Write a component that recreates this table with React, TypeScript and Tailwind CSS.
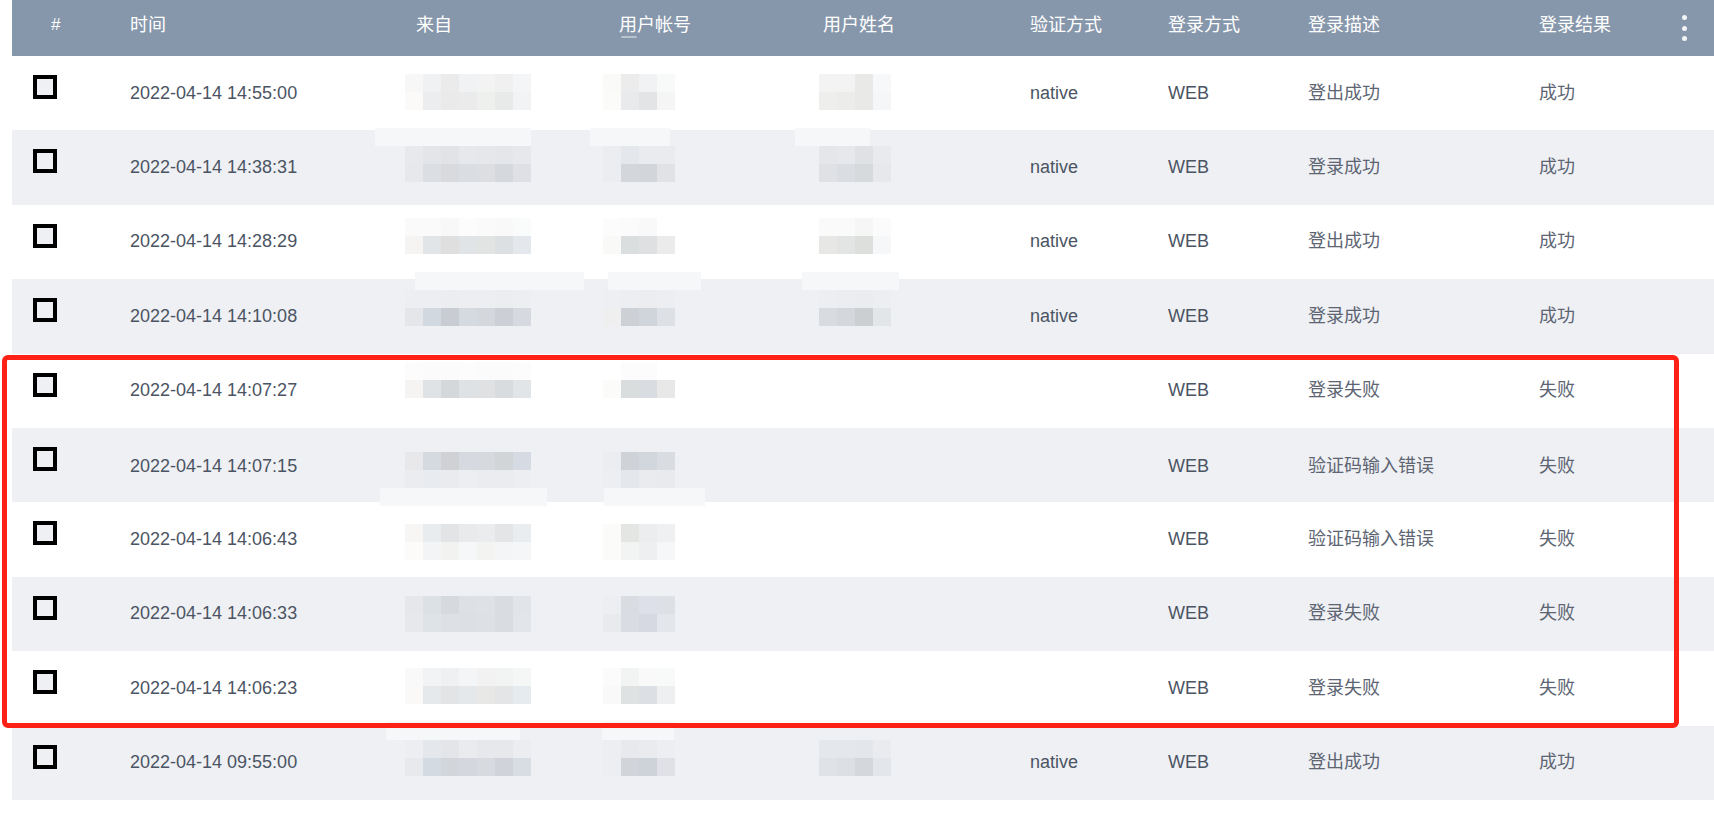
import React from "react";

type Grid = string[][];
type Smear = { ml: number; w: number };
type Cell = { blocks: Grid; smearTop?: Smear; smearBottom?: Smear };

type Row = {
  time: string;
  auth: string;
  desc: string;
  result: string;
  top: number;
  from: Cell;
  acct: Cell;
  name?: Cell;
};

const rows: Row[] = [
  {
    time: "2022-04-14 14:55:00",
    auth: "native",
    desc: "登出成功",
    result: "成功",
    top: 18,
    from: {
      blocks: [
        ["#f7f7f7", "#f0f1f2", "#ebebeb", "#f1f2f3", "#f2f3f2", "#f0f0f0", "#f4f5f6"],
        ["#fbfaf9", "#ecedef", "#eaeaea", "#ebebeb", "#eef0ee", "#e8e9e9", "#f2f3f4"],
      ],
    },
    acct: {
      blocks: [
        ["#fafaf9", "#ececed", "#f1f2f3", "#f8f9f9"],
        ["#fbfbfa", "#e9eaeb", "#e3e4e6", "#f5f5f5"],
      ],
    },
    name: {
      blocks: [
        ["#f2f3f2", "#f2f3f2", "#e9eae8", "#f7f8f9"],
        ["#eeeeec", "#ecedeb", "#e9e9e7", "#f5f6f7"],
      ],
    },
  },
  {
    time: "2022-04-14 14:38:31",
    auth: "native",
    desc: "登录成功",
    result: "成功",
    top: 15.6,
    from: {
      smearTop: { ml: -30, w: 156 },
      blocks: [
        ["#e8e9ec", "#e3e5e9", "#e2e3e7", "#e7e8ec", "#e5e7eb", "#e4e6ea", "#e6e8ec"],
        ["#e7e8ec", "#dbdfe4", "#d8dade", "#dadde1", "#dcdee2", "#d5d8dc", "#dfe0e6"],
      ],
    },
    acct: {
      smearTop: { ml: -13, w: 80 },
      blocks: [
        ["#ecedf0", "#e4e7eb", "#e9ebee", "#eaebee"],
        ["#ecedf0", "#d3d6da", "#d2d5da", "#e0e2e6"],
      ],
    },
    name: {
      smearTop: { ml: -24, w: 75 },
      blocks: [
        ["#e4e6ea", "#e6e8ec", "#dfe1e5", "#e8eaee"],
        ["#dfe1e5", "#dadde1", "#d7dadd", "#e6e8ec"],
      ],
    },
  },
  {
    time: "2022-04-14 14:28:29",
    auth: "native",
    desc: "登出成功",
    result: "成功",
    top: 13.2,
    from: {
      blocks: [
        ["#fafafa", "#f9faf9", "#f7f8f7", "#fbfcfb", "#f9faf9", "#f8f9f8", "#fafbfb"],
        ["#f5f4f3", "#e1e5e8", "#dfdfdf", "#e1e4e6", "#e2e3e3", "#dde0e3", "#e4e8ec"],
      ],
    },
    acct: {
      blocks: [
        ["#fcfcfc", "#fbfbfb", "#f9f9f9", "#ffffff"],
        ["#f9f9f7", "#dbdede", "#dee0e2", "#ebebeb"],
      ],
    },
    name: {
      blocks: [
        ["#fafafa", "#fafafa", "#f6f6f6", "#fbfbfb"],
        ["#e7e8e6", "#e3e5e5", "#dddfdd", "#f6f7f8"],
      ],
    },
  },
  {
    time: "2022-04-14 14:10:08",
    auth: "native",
    desc: "登录成功",
    result: "成功",
    top: 10.8,
    from: {
      smearTop: { ml: 10, w: 169 },
      blocks: [
        ["#eceef1", "#eceef2", "#ebedf1", "#eceef2", "#eceef1", "#ebedf1", "#eceef2"],
        ["#e4e6ea", "#d2d8df", "#c9cdd3", "#d5d9e0", "#d4d8dd", "#ccd0d6", "#d6d9e0"],
      ],
    },
    acct: {
      smearTop: { ml: 5, w: 93 },
      blocks: [
        ["#eeeff2", "#eceef1", "#ebedf0", "#eceef1"],
        ["#efefef", "#cdd1d5", "#d0d5db", "#dde0e4"],
      ],
    },
    name: {
      smearTop: { ml: -17, w: 97 },
      blocks: [
        ["#eceef1", "#ebedf0", "#eaecef", "#eceef1"],
        ["#d8dbdf", "#d4d7db", "#cbcfd2", "#e2e6e9"],
      ],
    },
  },
  {
    time: "2022-04-14 14:07:27",
    auth: "",
    desc: "登录失败",
    result: "失败",
    top: 8.4,
    from: {
      blocks: [
        ["#fcfcfc", "#fbfbfb", "#fbfbfb", "#fcfcfc", "#fbfbfb", "#fbfbfb", "#fcfcfc"],
        ["#f5f4f2", "#dfe3e6", "#d5d8db", "#dfe2e5", "#e0e1e2", "#d9dcdf", "#e1e5e8"],
      ],
    },
    acct: {
      blocks: [
        ["#ffffff", "#fcfcfc", "#fcfcfc", "#ffffff"],
        ["#fbfbfa", "#d9dddd", "#d9dce0", "#e8e8e9"],
      ],
    },
  },
  {
    time: "2022-04-14 14:07:15",
    auth: "",
    desc: "验证码输入错误",
    result: "失败",
    top: 24,
    from: {
      smearBottom: { ml: -25, w: 167 },
      blocks: [
        ["#e8e8ea", "#d4dae0", "#cfd1d5", "#d6dae0", "#d6d9de", "#d1d5d8", "#d6dae2"],
        ["#ebecef", "#e8ecf0", "#e9ebee", "#eceef1", "#ebecef", "#eaecef", "#eceef1"],
      ],
    },
    acct: {
      smearBottom: { ml: 1, w: 101 },
      blocks: [
        ["#ecedf0", "#cfd3d8", "#d2d6dd", "#d9dce1"],
        ["#eceef1", "#e4e7eb", "#e9ebef", "#e8eaee"],
      ],
    },
  },
  {
    time: "2022-04-14 14:06:43",
    auth: "",
    desc: "验证码输入错误",
    result: "失败",
    top: 21.6,
    from: {
      blocks: [
        ["#f7f6f4", "#e8ecef", "#e3e4e5", "#e9eaeb", "#ebeced", "#e4e5e6", "#e9edf0"],
        ["#fcfbfa", "#f3f4f5", "#f2f2f1", "#f6f7f8", "#f3f4f2", "#f4f5f6", "#f5f6f7"],
      ],
    },
    acct: {
      blocks: [
        ["#fbfbfa", "#e4e6e4", "#ecedee", "#eef0f1"],
        ["#fbfbf9", "#f2f3f3", "#eeeff0", "#f6f7f8"],
      ],
    },
  },
  {
    time: "2022-04-14 14:06:33",
    auth: "",
    desc: "登录失败",
    result: "失败",
    top: 19.2,
    from: {
      blocks: [
        ["#e6e7ea", "#dce1e5", "#d6d9de", "#dde0e5", "#dee1e6", "#d9dce1", "#e1e4e8"],
        ["#e7e8ec", "#dde3e7", "#dde1e6", "#dce0e5", "#dde0e5", "#d9dde2", "#e2e5e9"],
      ],
    },
    acct: {
      blocks: [
        ["#eceef1", "#d9dce1", "#dde0e8", "#dde0e5"],
        ["#e9eaee", "#d9dce2", "#d6d9e1", "#e3e6ea"],
      ],
    },
  },
  {
    time: "2022-04-14 14:06:23",
    auth: "",
    desc: "登录失败",
    result: "失败",
    top: 16.8,
    from: {
      blocks: [
        ["#f9f9f9", "#f2f3f4", "#eff0f1", "#f4f5f6", "#f1f2f1", "#f2f3f3", "#f5f6f6"],
        ["#faf9f7", "#e5e9ec", "#e3e4e5", "#e5e8ea", "#e8e9e6", "#e4e5e6", "#e5ebef"],
      ],
    },
    acct: {
      blocks: [
        ["#fbfbfb", "#f2f4f3", "#f9f9f9", "#f8f9f9"],
        ["#f9f9f9", "#dfe2e3", "#dcdfe3", "#eeeff0"],
      ],
    },
  },
  {
    time: "2022-04-14 09:55:00",
    auth: "native",
    desc: "登出成功",
    result: "成功",
    top: 14.4,
    from: {
      smearTop: { ml: -19, w: 134 },
      blocks: [
        ["#eceef1", "#e4e7eb", "#e3e5e9", "#e9ebee", "#e6e8eb", "#e6e8eb", "#ebedf0"],
        ["#e8e9ec", "#d3dae2", "#d2d6db", "#d4d8de", "#d7dbe0", "#d0d4da", "#d8dce3"],
      ],
    },
    acct: {
      smearTop: { ml: -1, w: 72 },
      blocks: [
        ["#eceef1", "#e7e9ed", "#e9ebee", "#eceef1"],
        ["#eceef1", "#d1d5da", "#cdd3d9", "#dfe1e6"],
      ],
    },
    name: {
      blocks: [
        ["#e4e7eb", "#e4e7eb", "#e3e6ea", "#e9ebee"],
        ["#dfe2e6", "#dcdfe3", "#d4d7db", "#e3e6ea"],
      ],
    },
  },
];

const cols =
  "grid grid-cols-[118px_286px_203px_204px_207px_138px_140px_231px_1fr]";

const Mosaic = ({ cell, top, smearColor }: { cell: Cell; top: number; smearColor: string }) => (
  <div
    className="flex flex-col self-start"
    style={{ marginTop: cell.smearTop ? top - 18 : top }}
  >
    {cell.smearTop && (
      <div
        className="h-[18px]"
        style={{ marginLeft: cell.smearTop.ml, width: cell.smearTop.w, background: smearColor }}
      />
    )}
    {cell.blocks.map((line, i) => (
      <div key={i} className="flex">
        {line.map((c, j) => (
          <div key={j} className="h-[18px] w-[18px]" style={{ background: c }} />
        ))}
      </div>
    ))}
    {cell.smearBottom && (
      <div
        className="h-[18px]"
        style={{ marginLeft: cell.smearBottom.ml, width: cell.smearBottom.w, background: smearColor }}
      />
    )}
  </div>
);

const HeadCell = ({ children }: { children: React.ReactNode }) => (
  <div className="flex items-center pb-[6px]">{children}</div>
);

export default function App() {
  return (
    <div
      className="relative min-h-screen w-full bg-white"
      style={{ fontFamily: '"Liberation Sans", Arial, "Noto Sans CJK SC", sans-serif' }}
    >
      <div className="ml-[12px]">
        {/* header */}
        <div className={`${cols} h-[56px] bg-[#8797ab] text-[18px] text-white`}>
          <HeadCell>
            <span className="pl-[39px] text-[17px]">#</span>
          </HeadCell>
          <HeadCell>时间</HeadCell>
          <HeadCell>来自</HeadCell>
          <HeadCell>
            <span className="relative">
              用户帐号
              <span className="absolute left-[2px] top-[24px] h-[2px] w-[16px] rounded bg-[#b9c2cf]" />
            </span>
          </HeadCell>
          <HeadCell>用户姓名</HeadCell>
          <HeadCell>验证方式</HeadCell>
          <HeadCell>登录方式</HeadCell>
          <HeadCell>登录描述</HeadCell>
          <div className="flex items-center justify-between pr-[27px]">
            <span className="pb-[6px]">登录结果</span>
            <div className="flex flex-col gap-[5.5px]">
              <span className="h-[5px] w-[5px] rounded-full bg-[#f3f4f6]" />
              <span className="h-[5px] w-[5px] rounded-full bg-[#f3f4f6]" />
              <span className="h-[5px] w-[5px] rounded-full bg-[#f3f4f6]" />
            </div>
          </div>
        </div>

        {/* rows */}
        {rows.map((r, i) => {
          const gray = i % 2 === 1;
          const smear = gray ? "#f6f7f9" : "#fcfcfc";
          return (
            <div
              key={i}
              className={`${cols} h-[74.4px] items-center text-[18px] text-[#4b5463] ${
                gray ? "bg-[#eff0f4]" : "bg-white"
              }`}
            >
              <div className="self-start pl-[21px] pt-[19px]">
                <div className="h-6 w-6 border-[4px] border-black bg-[#eff0f4]" />
              </div>
              <div>{r.time}</div>
              <div className="-ml-[11px] flex h-full">
                <Mosaic cell={r.from} top={r.top} smearColor={smear} />
              </div>
              <div className="-ml-[16px] flex h-full">
                <Mosaic cell={r.acct} top={r.top} smearColor={smear} />
              </div>
              <div className="-ml-[4px] flex h-full">
                {r.name && <Mosaic cell={r.name} top={r.top} smearColor={smear} />}
              </div>
              <div>{r.auth}</div>
              <div>WEB</div>
              <div className="text-[#5d6573]">{r.desc}</div>
              <div className="text-[#5d6573]">{r.result}</div>
            </div>
          );
        })}
      </div>

      {/* annotation box */}
      <div className="pointer-events-none absolute left-[2px] top-[355px] h-[373px] w-[1677px] rounded-[6px] border-[5px] border-[#ff2116]" />
    </div>
  );
}
